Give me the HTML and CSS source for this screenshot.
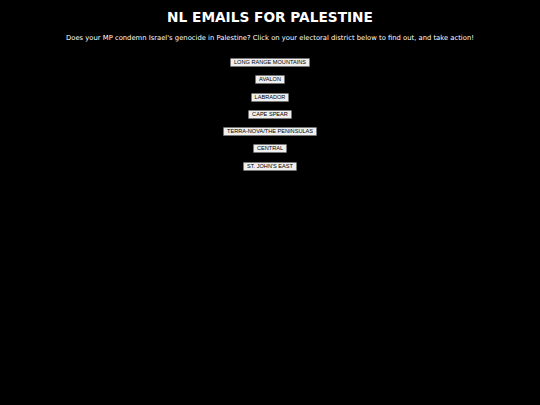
FILE: index.html
```html
<!DOCTYPE html>
<html>
<head>
<meta charset="utf-8">
<link rel="stylesheet" href="styles.css">
</head>
<body>
<main class="page">
  <h1 class="title">NL EMAILS FOR PALESTINE</h1>
  <p class="intro">Does your MP condemn Israel's genocide in Palestine? Click on your electoral district below to find out, and take action!</p>
  <div class="districts">
    <button class="district">LONG RANGE MOUNTAINS</button>
    <button class="district">AVALON</button>
    <button class="district">LABRADOR</button>
    <button class="district">CAPE SPEAR</button>
    <button class="district">TERRA-NOVA/THE PENINSULAS</button>
    <button class="district">CENTRAL</button>
    <button class="district">ST. JOHN'S EAST</button>
  </div>
</main>
</body>
</html>
```
FILE: styles.css
```css
html, body {
  margin: 0;
  padding: 0;
  background: #000;
}
.page {
  color: #fff;
  font-family: "DejaVu Sans", Verdana, sans-serif;
  text-align: center;
  padding-top: 9px;
}
.title {
  margin: 0;
  font-size: 13.7px;
  font-weight: bold;
  line-height: 16px;
}
.intro {
  margin: 9px 0 0;
  font-size: 6.8px;
  line-height: 9px;
}
.districts {
  margin-top: 15px;
  display: flex;
  flex-direction: column;
  align-items: center;
  gap: 8.3px;
}
.district {
  font-family: "Liberation Sans", Arial, sans-serif;
  font-size: 5.6px;
  line-height: 7px;
  padding: 0 3px;
  background: #efefef;
  color: #000;
  border: 1px solid #767676;
  border-radius: 1px;
}
```
